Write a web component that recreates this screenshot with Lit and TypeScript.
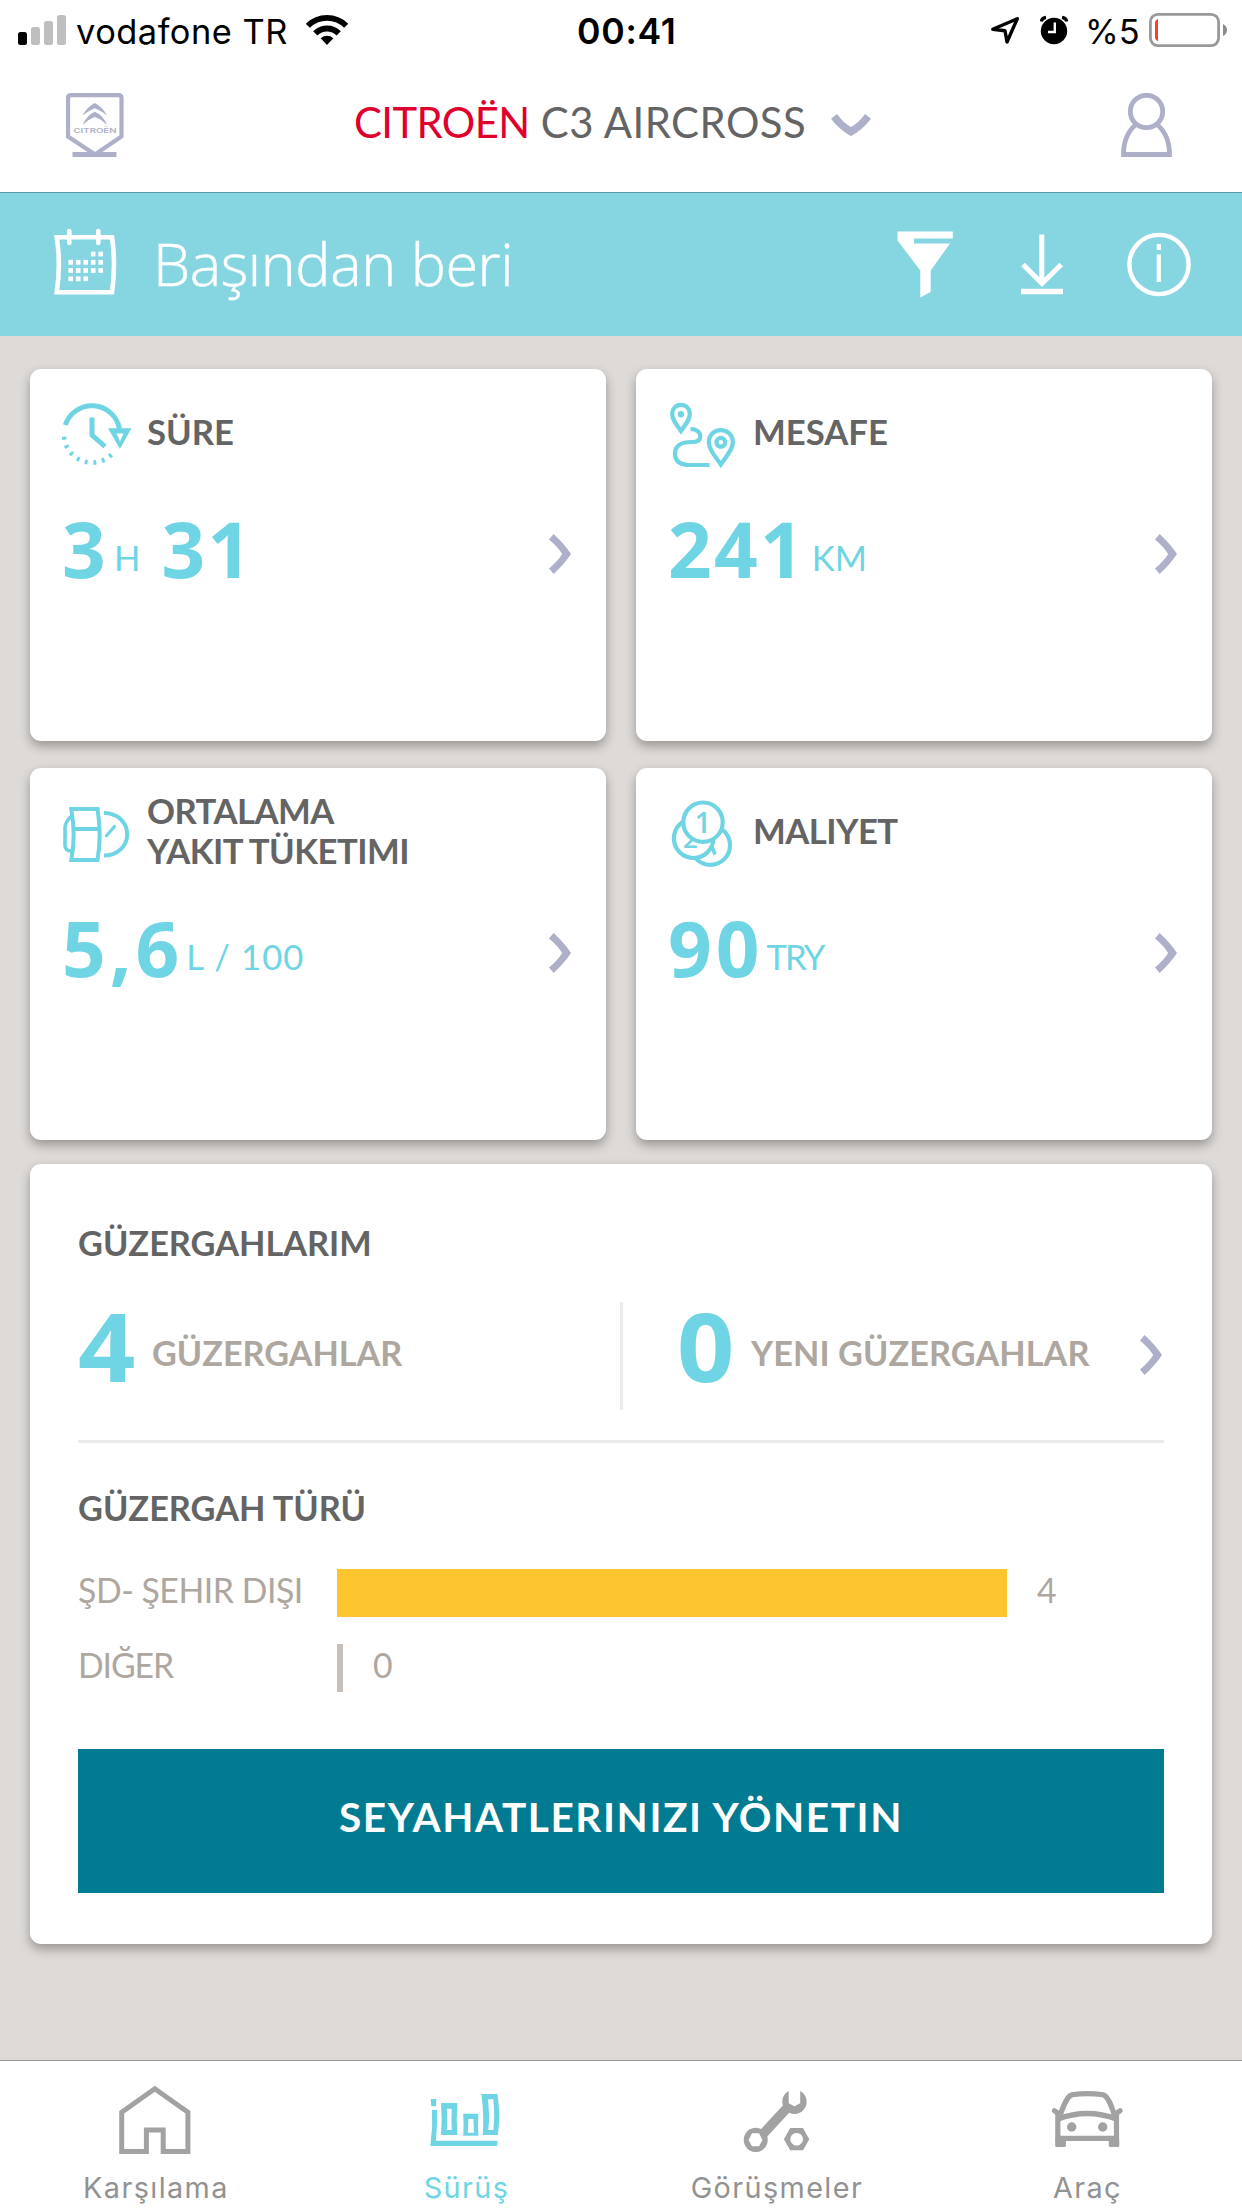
import { LitElement, html, svg, css, nothing, TemplateResult } from "lit";
import { customElement, property } from "lit/decorators.js";
import { classMap } from "lit/directives/class-map.js";

const chevron = html`<svg class="chevron" width="22" height="40" viewBox="0 0 22 40">
  <path fill="#adb0c8" d="M4.6 0Q15 9.5 22 20Q15 30.500 4.600 40L0 34.500Q8.500 27.500 13.200 20Q8.500 12.500 0 5.500Z" />
</svg>`;

/* Card icons are drawn in the card's own coordinates. */
const clockIcon = svg`
  <g fill="none" stroke="#6fd5e4" stroke-width="5">
    <path d="M35.300 56A28 28 0 0 1 89.500 60" />
    <path d="M62 48.500V66L75 77.500" />
    <path d="M81.500 85.700A28 28 0 0 1 34 65" stroke-width="4.600" stroke-dasharray="2.900 5.700" />
  </g>
  <path fill="#6fd5e4" fill-rule="evenodd" d="M78 59.300H101.500L90 80ZM86.500 64.500L90 72.500L93.500 64.500Z" />`;

const routeIcon = svg`
  <g fill="none" stroke="#6fd5e4" stroke-width="4.200">
    <path d="M45 62C39.500 54 36.200 50.500 36.200 45C36.200 39.500 40 35.900 45 35.900S53.800 39.500 53.800 45C53.800 50.500 50.500 54 45 62Z" />
    <path d="M84.800 95.500C78 86 72.800 79.500 72.800 73C72.800 66 78 61.200 84.800 61.200S96.900 66 96.900 73C96.900 79.500 91.500 86 84.800 95.500Z" />
    <circle cx="84.800" cy="73.300" r="4.400" />
    <path d="M54.500 60.200C60 59.800 64.300 63 64.300 67.200C64.300 71.500 61 73 56 73C46 73 39 76 39 84.500C39 92 44 96 54 96H73.500" />
  </g>
  <circle cx="44.900" cy="45.300" r="3.200" fill="#6fd5e4" />`;

const fuelIcon = svg`
  <g fill="none" stroke="#6fd5e4" stroke-width="4">
    <path d="M41.300 41Q46 67 41.300 92H67.500Q71.800 67 67.500 41Z" />
    <path d="M43.500 61H70" />
    <path d="M42 47.500Q35 54 35 60V77Q35 83 41.500 83" stroke-width="3.600" />
    <path d="M74 45C87 45 97.200 54 97.200 66.300S87 87.600 74 87.600" />
    <path d="M76.500 67.800L84.500 58.500" stroke-width="3.200" stroke-linecap="round" />
  </g>`;

const coinsIcon = svg`
  <g fill="#fff" stroke="#6fd5e4" stroke-width="4.200">
    <circle cx="74.300" cy="77.200" r="19.700" />
    <path d="M75.500 77.500L79 86.500" stroke-width="3.600" />
    <circle cx="57.600" cy="70.300" r="19.700" />
  </g>
  <text class="coin" x="47" y="80" font-size="26">2</text>
  <circle cx="67" cy="54.200" r="19.700" fill="#fff" stroke="#6fd5e4" stroke-width="4.200" />
  <text class="coin" x="58.500" y="64.700" font-size="29">1</text>`;

const homeIcon = svg`<path fill="none" stroke="#a2a2a2" stroke-width="5"
  d="M-33.300 90.500V51.300L-.2 27.700L32.900 51.300V90.500H8.200V69H-8.600V90.500Z" />`;

const driveIcon = svg`<path fill="#6fd5e4" fill-rule="evenodd"
  d="M-35.200 38H-29.700L-30 45.300H-34.700ZM-34 49H-29Q-28.600 64 -30.100 79.700H31.500L31.100 85H-35.700Q-33 67 -34 49Z
     M-25 42H-8.700Q-9.800 58 -8.700 74H-25Q-23.600 58 -25 42ZM-19.200 47.700Q-18.300 58 -19.200 69H-14.200Q-15 58 -14.200 47.700Z
     M-2.800 52.700H12.400Q11.600 64 12.400 74.700H-2.800Q-2 64 -2.800 52.700ZM2.400 58L1.800 71.700H8L7.400 58Z
     M15.400 33H31.400Q34.800 54 31.800 74H16.800Q18.200 54 15.400 33ZM21.800 38.300Q24 54 22.300 69H27.300Q29 54 27.300 38.300Z" />`;

const serviceIcon = svg`
  <path fill="#a2a2a2" fill-rule="evenodd" d="M-20.200 66.700A12 12.200 0 1 1 -20.300 66.700ZM-24 72.300L-27.400 78.900L-24 85.300H-17L-13.500 78.900L-17 72.300Z" />
  <path stroke="#a2a2a2" stroke-width="9.600" d="M-12.500 72.500L11.500 46.500" />
  <path fill="#a2a2a2" d="M12.700 30V42.300L18.300 45.300L24.200 42.300V30A12.200 12.200 0 1 1 12.700 30Z" />
  <path fill="#a2a2a2" fill-rule="evenodd" d="M14.200 67H27L33.300 78.200L27 89.300H14.200L7.900 78.200ZM20.600 71.900A6.300 6.300 0 1 0 20.700 71.900Z" />`;

const carIcon = svg`
  <g fill="none" stroke="#a2a2a2" stroke-width="5.200">
    <path d="M-27.500 56C-23 43 -20 35.500 -15 33.800Q0 31.500 16 33.800C21 35.500 24 43 28 56" />
    <path d="M-29.500 58.200Q0 46.800 30 58.200" stroke-width="5.600" />
    <path d="M-29.200 53V80M29.500 53V80M-29 77.400H30" />
    <path d="M-32.500 49.800L-27 53.500M33 49.800L27.500 53.500" stroke-linecap="round" />
  </g>
  <g fill="#a2a2a2">
    <rect x="-31.800" y="78" width="10.700" height="8" rx="1.500" />
    <rect x="21.800" y="78" width="10.500" height="8" rx="1.500" />
    <circle cx="-15.300" cy="66" r="4.700" /><circle cx="15.700" cy="66" r="4.700" />
  </g>`;

@customElement("stat-card")
class StatCard extends LitElement {
  @property({ attribute: false }) lines: string[] = [];
  @property({ attribute: false }) icon: unknown = nothing;
  @property() value = "";
  @property() unit = "";
  @property() extra = "";
  @property({ type: Boolean }) wide = false;

  static styles = css`
    :host { display: flex; flex-direction: column; box-sizing: border-box; height: 372px; padding: 22px 35px 0 30px;
      background: #fff; border-radius: 11px; box-shadow: 0 5px 11px rgba(0,0,0,.32); }
    .head { display: flex; align-items: center; height: 81px; }
    .head svg { flex: none; }
    .title { margin: 0 0 0 13px; font: 700 34.700px/39.300px Lato, sans-serif; color: #646464; white-space: nowrap; }
    .line { display: block; }
    .long { letter-spacing: -.55px; }
    .row { display: flex; align-items: flex-start; height: 80px; margin: 35.500px 0 0 2px; color: #6fd5e4; white-space: nowrap; }
    .num { font: 700 76.500px/81px "Open Sans", sans-serif; letter-spacing: 2.200px; }
    .unit { font: 400 34.700px/40px Lato, sans-serif; padding: 30px 0 0 6px; }
    .spaced { letter-spacing: 1.100px; }
    .tight { letter-spacing: -2px; }
    .extra { margin-left: 21px; }
    .wide { letter-spacing: 4px; }
    .wide + .unit { padding-left: 3px; }
    .chevron { margin: 26.500px 0 0 auto; }
    .coin { font-family: "Open Sans", sans-serif; font-weight: 600; fill: #6fd5e4; }
  `;

  render() {
    return html`
      <div class="head">
        <svg width="74" height="81" viewBox="30 22 74 81">${this.icon}</svg>
        <h2 class=${classMap({ title: true, long: this.lines[0].length > 6 })}>
          ${this.lines.map((l) => html`<span class="line">${l}</span>`)}
        </h2>
      </div>
      <div class="row">
        <span class=${classMap({ num: true, wide: this.wide })}>${this.value}</span>
        <span class=${classMap({ unit: true, spaced: this.unit.length > 3, tight: this.unit.length === 3 })}>${this.unit}</span>
        ${this.extra ? html`<span class="num extra">${this.extra}</span>` : nothing}
        ${chevron}
      </div>`;
  }
}

@customElement("app-root")
class AppRoot extends LitElement {
  static styles = css`
    :host { display: flex; flex-direction: column; width: 1242px; height: 2208px; background: #dedad7; overflow: hidden; }
    svg { flex: none; display: block; }

    .status { display: grid; grid-template-columns: 577px 414px 1fr; height: 50px; padding-top: 12px; background: #fff;
      font: 400 34.400px/40px Inter, sans-serif; color: #000; white-space: nowrap; }
    .carrier, .system { display: flex; align-items: flex-start; }
    .carrier { padding-left: 18px; }
    .name { width: 230px; margin-left: 10px; letter-spacing: .5px; }
    .time { font-weight: 600; font-size: 35.600px; letter-spacing: .75px; }
    .alarm { margin-left: 21px; }
    .level { width: 64px; margin-left: 17px; }

    .header { display: flex; align-items: flex-start; box-sizing: border-box; height: 131px; padding: 31px 70px 0 66px;
      background: #fff; border-bottom: 1px solid #5b97a2; }
    .car { margin: 4px 0 0 230px; font: 400 41.800px/50px Lato, sans-serif; color: #646464; letter-spacing: .5px; white-space: nowrap; }
    .brand { color: #e0002d; letter-spacing: -.6px; }
    .down { margin: 21px 0 0 25px; }
    .person { margin-left: auto; }

    .period { display: flex; align-items: center; box-sizing: border-box; height: 143px; padding: 0 49px 0 50px; background: #86d6e2; }
    .range { flex: 1; margin: 0 0 3px 33px; font: 300 59.200px/80px "Open Sans", sans-serif; letter-spacing: -.4px; color: #fff;
      -webkit-text-stroke: .5px #fff; }

    main { flex: 1; padding: 33px 30px 0; }
    .stats { display: grid; grid-template-columns: 576px 576px; gap: 27px 30px; }

    .trips { box-sizing: border-box; height: 780px; margin-top: 24px; padding: 58.500px 48px 0; background: #fff;
      border-radius: 11px; box-shadow: 0 5px 11px rgba(0,0,0,.32); font: 400 33.800px/40px Lato, sans-serif; color: #aea79f; }
    h3 { margin: 0; font: 700 34.300px/40px Lato, sans-serif; color: #646464; }
    .counts { display: flex; height: 108px; margin-top: 39.500px; }
    .count { display: flex; flex: 1; align-items: flex-start; font: 700 34.200px/40px Lato, sans-serif; white-space: nowrap; }
    .count + .count { border-left: 3px solid #ebebeb; padding-left: 54px; flex: none; width: 487px; letter-spacing: .1px; }
    .big { width: 74px; font: 700 95.600px/87px "Open Sans", sans-serif; color: #6fd5e4; }
    .digit { display: inline-block; transform: scaleX(1.05); transform-origin: 0 50%; }
    .what { padding-top: 31px; }
    .count .chevron { margin: 33px 2px 0 auto; }
    .rule { height: 3px; margin: 30px 0 45px; background: #ebebeb; }
    .bar-row { display: flex; align-items: center; height: 48px; margin-top: 41px; }
    .bar-row + .bar-row { margin-top: 27px; }
    .kind { width: 259px; padding-bottom: 6.500px; letter-spacing: -.45px; }
    .short { letter-spacing: -1.100px; }
    .bar { height: 48px; background: #c7c0ba; }
    .road { background: #fdc52f; }
    .n { padding: 0 0 6.500px 30px; }
    .manage { display: block; width: 100%; height: 144px; margin-top: 57px; padding: 0 0 8px; border: 0; background: #007b92; color: #fff;
      font: 700 40.500px/50px Lato, sans-serif; letter-spacing: 1.600px; }

    nav { display: grid; grid-template-columns: repeat(4, 1fr); height: 147px; background: #fff; border-top: 1px solid #999694; }
    .tab { display: flex; flex-direction: column; align-items: center; gap: 9px; color: #929292;
      font: 400 28.800px/36px Inter, sans-serif; letter-spacing: 1.400px; }
    .label { padding-left: 1.400px; }
    .active { color: #6fd5e4; }
  `;

  private bars = [
    { kind: "ŞD- ŞEHIR DIŞI", n: 4, road: true },
    { kind: "DIĞER", n: 0, road: false },
  ];

  private tabs: [string, TemplateResult | unknown][] = [
    ["Karşılama", homeIcon],
    ["Sürüş", driveIcon],
    ["Görüşmeler", serviceIcon],
    ["Araç", carIcon],
  ];

  private dots() {
    const rows: [number, number[]][] = [[253.5, [3, 4]], [261.8, [0, 1, 2, 3, 4]], [270, [0, 1, 2, 3, 4]], [278.3, [0, 1, 2]]];
    return rows.map(([y, cols]) => cols.map((c) => svg`<rect x=${68.4 + c * 7.5} y=${y - 2.4} width="4.600" height="4.800" />`));
  }

  render() {
    return html`
      <div class="status">
        <div class="carrier">
          <svg width="48" height="34" viewBox="18 12 48 34">
            <rect x="18" y="32" width="9" height="13" rx="2.500" />
            <g fill="#bfbfbf"><rect x="31" y="27" width="9" height="18" rx="2.500" /><rect x="44" y="21" width="9" height="24" rx="2.500" /><rect x="57" y="15" width="9" height="30" rx="2.500" /></g>
          </svg>
          <span class="name">vodafone TR</span>
          <svg width="42" height="34" viewBox="0 -3 42 34">
            <g fill="none" stroke="#000"><path stroke-width="5.800" d="M1.800 10.800A27.200 27.200 0 0 1 40.200 10.800" /><path stroke-width="6" d="M9.300 18.300A16.600 16.600 0 0 1 32.700 18.300" /></g>
            <path d="M21 30L14.700 23.300A9.200 9.200 0 0 1 27.300 23.300Z" />
          </svg>
        </div>
        <span class="time">00:41</span>
        <div class="system">
          <svg width="28" height="34" viewBox="991 12 28 34"><path fill="none" stroke="#000" stroke-width="3.400" stroke-linejoin="round" d="M1017.300 18.700L1007 42L1005 30.800L992.800 29.300Z" /></svg>
          <svg class="alarm" width="28" height="34" viewBox="1040 12 28 34">
            <circle cx="1054" cy="31" r="13.200" />
            <path fill="none" stroke="#000" stroke-width="3.200" d="M1041.200 21.500Q1042 18 1046 17.400M1066.800 21.500Q1066 18 1062 17.400" />
            <path fill="none" stroke="#fff" stroke-width="2.400" d="M1054.800 22.500V32H1048" />
          </svg>
          <span class="level">%5</span>
          <svg width="80" height="36" viewBox="1149 12 80 36">
            <rect x="1150.400" y="14.400" width="68.200" height="31.200" rx="7.500" fill="none" stroke="#999" stroke-width="2.800" />
            <path fill="#ff3b30" d="M1158 19V41Q1155 40 1155 37V23Q1155 20 1158 19Z" />
            <path fill="#8c8c8c" d="M1223 24Q1227 26 1227 30T1223 36Z" />
          </svg>
        </div>
      </div>

      <header class="header">
        <svg width="58" height="64" viewBox="66 93 58 64">
          <g fill="none" stroke="#adb0c8">
            <path stroke-width="4.200" d="M71 95.100H118.500Q121.500 95.100 121.500 98V136.500L95 154.500L68 136.500V98Q68 95.100 71 95.100Z" />
            <path stroke-width="5" d="M72.500 154.500H116.500" />
          </g>
          <g fill="#adb0c8">
            <path d="M82.400 115.500Q88 106 94.800 103Q101.500 106 107.300 115.500Q101 110.500 94.800 108.300Q89 110.500 82.400 115.500Z" />
            <path d="M82.400 125.300Q87 115 94.800 111.700Q103 115 107.300 125.300Q101 119 94.800 117Q89 119 82.400 125.300Z" />
            <text x="73.500" y="133.400" font-family="Inter, sans-serif" font-size="6.600" font-weight="600" textLength="43" lengthAdjust="spacingAndGlyphs">CITROËN</text>
          </g>
        </svg>
        <div class="car"><span class="brand">CITROËN</span> C3 AIRCROSS</div>
        <svg class="down" width="40" height="22" viewBox="0 0 40 22"><path fill="#adb0c8" d="M0 4.800L6 0Q12 8.500 20 13Q28 8.500 34 0L40 4.800Q31 16.500 20 22Q9 16.500 0 4.800Z" /></svg>
        <svg class="person" width="51" height="64" viewBox="1121 93 51 64">
          <g fill="none" stroke="#adb0c8" stroke-width="4.800">
            <circle cx="1146.500" cy="111.500" r="16.200" />
            <path d="M1136 124.500C1127 132 1123.500 143 1123.500 154.500H1169.500C1169.500 143 1166 132 1157 124.500" />
          </g>
        </svg>
      </header>

      <div class="period">
        <svg width="70" height="74" viewBox="50 227.500 70 74">
          <path fill="none" stroke="#fff" stroke-width="4.600" d="M56.700 236.700Q61 264 56.700 291.800H112Q116 264 112 236.700Z" />
          <path stroke="#fff" stroke-width="4.600" stroke-linecap="round" d="M69.300 230.500V242.500M98.300 230.500V242.500" />
          <g fill="#fff">${this.dots()}</g>
        </svg>
        <div class="range">Başından beri</div>
        <svg width="296" height="74" viewBox="897 227.500 296 74">
          <path fill="#fff" d="M897.500 231H952.800V238H914V243H950L930.700 270V291.500L920.300 297V270L897.500 240Z" />
          <g fill="none" stroke="#fff" stroke-width="5">
            <path d="M1041.800 234V280M1023 264L1042 283L1061.200 264" />
            <path stroke-width="5.600" d="M1021 291H1063" />
            <circle cx="1159" cy="264" r="29.600" stroke-width="4.400" />
            <path stroke-width="4.200" d="M1158.800 243.500V249.500M1158.800 254V281.500" />
          </g>
        </svg>
      </div>

      <main>
        <section class="stats">
          <stat-card .lines=${["SÜRE"]} .icon=${clockIcon} value="3" unit="H" extra="31"></stat-card>
          <stat-card .lines=${["MESAFE"]} .icon=${routeIcon} value="241" unit="KM"></stat-card>
          <stat-card .lines=${["ORTALAMA", "YAKIT TÜKETIMI"]} .icon=${fuelIcon} value="5,6" unit="L / 100" wide></stat-card>
          <stat-card .lines=${["MALIYET"]} .icon=${coinsIcon} value="90" unit="TRY" wide></stat-card>
        </section>

        <section class="trips">
          <h3>GÜZERGAHLARIM</h3>
          <div class="counts">
            <div class="count"><span class="big"><span class="digit">4</span></span><span class="what">GÜZERGAHLAR</span></div>
            <div class="count"><span class="big"><span class="digit">0</span></span><span class="what">YENI GÜZERGAHLAR</span>${chevron}</div>
          </div>
          <div class="rule"></div>
          <h3>GÜZERGAH TÜRÜ</h3>
          ${this.bars.map((b) => html`<div class="bar-row">
            <span class=${classMap({ kind: true, short: !b.road })}>${b.kind}</span>
            <span class=${classMap({ bar: true, road: b.road })} style="width:${Math.max(6, b.n * 167.5)}px"></span>
            <span class="n">${b.n}</span>
          </div>`)}
          <button class="manage">SEYAHATLERINIZI YÖNETIN</button>
        </section>
      </main>

      <nav>
        ${this.tabs.map(([label, icon], i) => html`<div class=${classMap({ tab: true, active: i === 1 })}>
          <svg width="90" height="100" viewBox="-45 0 90 100">${icon}</svg>
          <span class="label">${label}</span>
        </div>`)}
      </nav>`;
  }
}
